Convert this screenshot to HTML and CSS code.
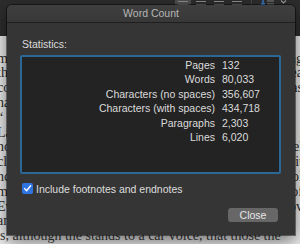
FILE: index.html
```html
<!DOCTYPE html>
<html lang="en">
<head>
  <meta charset="UTF-8" />
  <meta name="viewport" content="width=device-width, initial-scale=1.0" />
  <title>Word Count</title>
  <link rel="stylesheet" href="styles.css">
</head>
<body>
  <div class="toolbar">
    <div class="tool-group">
      <span class="align on"><i></i><i></i></span>
      <span class="align"><i></i><i></i></span>
      <span class="align"><i></i><i></i></span>
      <span class="align"><i></i><i></i></span>
    </div>
    <span class="divider"></span>
    <span class="spacing">
      <svg width="20" height="8" viewBox="0 0 20 8">
        <path d="M3 0 V5 M1 3.5 L3 5.5 L5 3.5" stroke="#3a8ef0" stroke-width="1.2" fill="none"/>
        <path d="M7 1 H14 M7 4 H14" stroke="#8a8a8a" stroke-width="1.2"/>
      </svg>
    </span>
    <span class="chevron">
      <svg width="7" height="5" viewBox="0 0 7 5"><path d="M1 0.5 L3.5 3 L6 0.5" stroke="#9a9a9a" stroke-width="1.1" fill="none"/></svg>
    </span>
  </div>

  <!-- document behind the dialog: only the edges show -->
  <div class="page">
    <p class="ln"><span>mu</span><span>ng</span></p>
    <p class="ln"><span>th</span><span>ea</span></p>
    <p class="ln"><span>co</span><span>as</span></p>
    <p class="ln"><span>na</span><span>.</span></p>
    <p class="ln"><span>“</span><span></span></p>
    <p class="ln"><span>La</span><span>:</span></p>
    <p class="ln"><span>no</span><span>el</span></p>
    <p class="ln"><span>cl</span><span>it</span></p>
    <p class="ln"><span>nc</span><span>ol</span></p>
    <p class="ln"><span>ma</span><span>of</span></p>
    <p class="ln"><span>Ev</span><span>ov</span></p>
    <p class="ln"><span>an</span><span>,</span></p>
    <p class="ln last"><span>s, although the stands to a car voice, that those the</span></p>
  </div>

  <!-- dialog over the document -->
  <div class="dialog">
    <div class="title">Word Count</div>
    <div class="body">
      <div class="caption">Statistics:</div>
      <div class="stats">
        <span class="label">Pages</span><span class="value">132</span>
        <span class="label">Words</span><span class="value">80,033</span>
        <span class="label">Characters (no spaces)</span><span class="value">356,607</span>
        <span class="label">Characters (with spaces)</span><span class="value">434,718</span>
        <span class="label">Paragraphs</span><span class="value">2,303</span>
        <span class="label">Lines</span><span class="value">6,020</span>
      </div>
      <label class="check">
        <span class="box">
          <svg width="11" height="11" viewBox="0 0 11 11"><path d="M2.6 5.6 L4.6 7.8 L8.6 2.8" stroke="#fff" stroke-width="1.4" fill="none" stroke-linecap="round" stroke-linejoin="round"/></svg>
        </span>
        Include footnotes and endnotes
      </label>
      <div class="actions">
        <button class="btn">Close</button>
      </div>
    </div>
  </div>
</body>
</html>
```

FILE: styles.css
```css
body {
  margin: 0;
  width: 300px;
  height: 244px;
  position: relative;
  overflow: hidden;
  background-color: #ececec;
  font-family: 'Liberation Sans', Arial, sans-serif;
}
.toolbar {
  height: 36px;
  background-color: #2d2d2d;
  display: flex;
  align-items: flex-start;
  padding-left: 175px;
}
.tool-group {
  display: flex;
  gap: 2px;
  margin-top: -6px;
}
.align {
  width: 16px;
  height: 12px;
  border-radius: 2px;
  display: flex;
  flex-direction: column;
  justify-content: flex-end;
  gap: 2px;
  padding: 0 3px 1px;
  box-sizing: border-box;
}
.align.on {
  background-color: #505050;
}
.align i {
  display: block;
  height: 1px;
  background-color: #8c8c8c;
}
.divider {
  width: 1px;
  height: 8px;
  background-color: #474747;
  margin-left: 6px;
}
.spacing {
  margin-left: 8px;
  line-height: 0;
}
.chevron {
  line-height: 0;
}
.page {
  margin: 0 -3px 0 -3px;
  padding-top: 15.6px;
  font-family: 'Liberation Serif', 'Times New Roman', serif;
  font-size: 14px;
  line-height: 14.8px;
  color: #2a2a2a;
}
.ln {
  margin: 0;
  height: 14.8px;
  display: flex;
  justify-content: space-between;
  white-space: nowrap;
}
.ln.last {
  color: #3a3a3a;
  padding-left: 3px;
}
.dialog {
  position: absolute;
  left: 7px;
  top: 5px;
  width: 288px;
  height: 230px;
  background-color: #353535;
  border-radius: 5px 5px 0 0;
  box-shadow: 0 0 0 1px rgba(0,0,0,0.45), 0 6px 18px rgba(0,0,0,0.55);
  overflow: hidden;
  color: #dcdcdc;
  font-size: 10.5px;
}
.title {
  height: 17px;
  line-height: 17px;
  text-align: center;
  color: #b6b6b6;
  background: linear-gradient(#3f3f3f, #383838);
  border-bottom: 1px solid #1e1e1e;
}
.body {
  padding: 15px 14px 0 13px;
}
.caption {
  line-height: 13px;
  margin: 0 0 4px 2px;
}
.stats {
  height: 119px;
  box-sizing: border-box;
  border: 2px solid #2c6895;
  border-radius: 2px;
  background-color: #232323;
  padding-top: 1px;
  display: grid;
  grid-template-columns: 193px 1fr;
  grid-auto-rows: 14.4px;
  column-gap: 7px;
  align-content: start;
  line-height: 14.4px;
}
.label {
  text-align: right;
}
.check {
  display: flex;
  align-items: center;
  gap: 3px;
  margin: 9px 0 0 2px;
  height: 11px;
  color: #dedede;
}
.box {
  width: 11px;
  height: 11px;
  border-radius: 2px;
  background-color: #2f74e0;
  line-height: 0;
}
.actions {
  display: flex;
  justify-content: flex-end;
  margin-top: 14px;
}
.btn {
  width: 50px;
  height: 14px;
  margin-right: 3px;
  padding: 0;
  border: none;
  border-radius: 3px;
  background-color: #676767;
  color: #e8e8e8;
  font-family: 'Liberation Sans', Arial, sans-serif;
  font-size: 10.5px;
  line-height: 14px;
}
```
